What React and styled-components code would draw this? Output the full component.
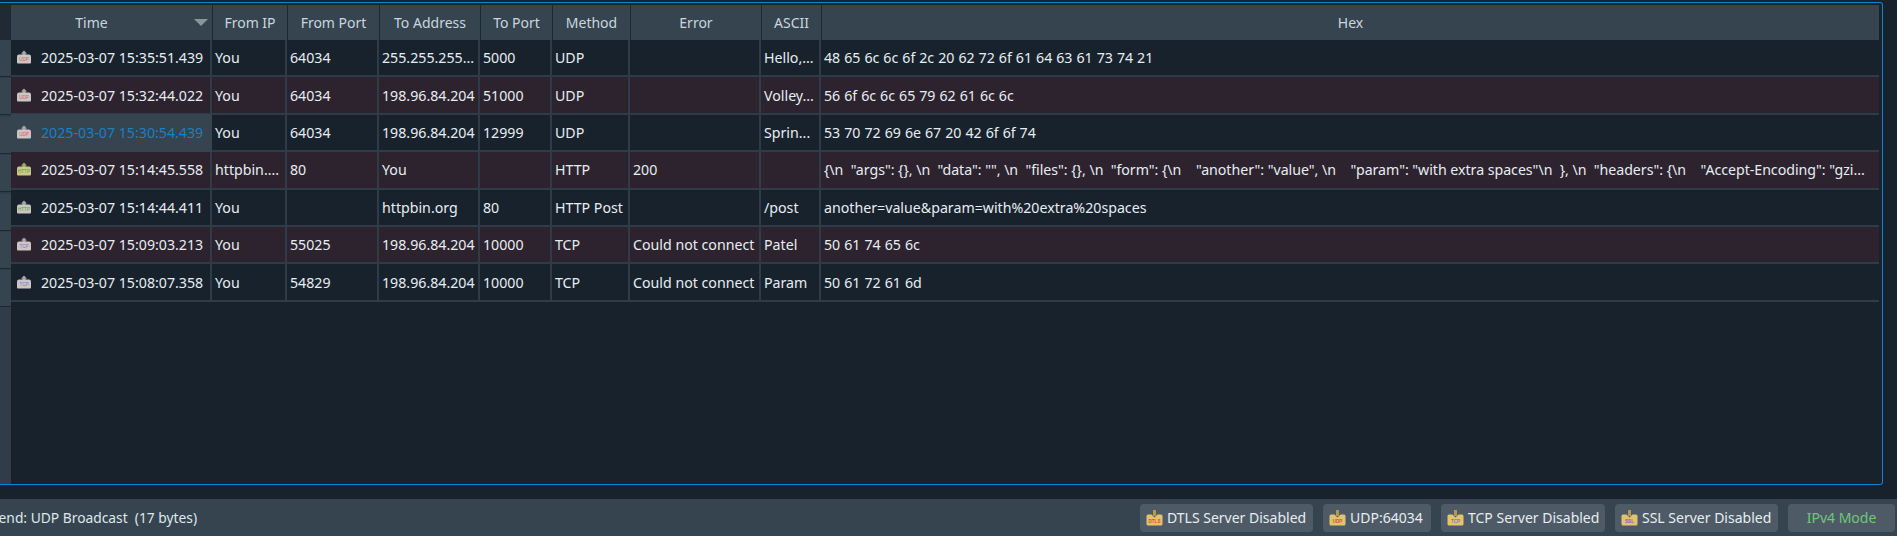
import React from 'react'
import styled, { createGlobalStyle } from 'styled-components'

const GlobalStyle = createGlobalStyle`
  html, body {
    margin: 0;
    padding: 0;
    background: #18222d;
  }
  body {
    font-family: "Noto Sans", "Open Sans", sans-serif;
    font-size: 14.2px;
    color: #e6edf2;
    overflow: hidden;
  }
`

const COLUMNS = '201px 75px 92px 101px 72px 78px 131px 60px 1fr'

const Page = styled.div`
  height: 536px;
  width: 1897px;
  display: flex;
  flex-direction: column;
`

const Frame = styled.div`
  flex: 1;
  min-height: 0;
  margin: 2px 14px 14px 0;
  border-top: 1px solid #1582cf;
  border-right: 1px solid #1582cf;
  border-bottom: 1px solid #1582cf;
  border-top-right-radius: 3px;
  border-bottom-right-radius: 3px;
  padding: 2px 3px 0 0;
  display: grid;
  grid-template-columns: 11px 1fr;
  grid-template-rows: 35px 1fr;
`

const Corner = styled.div`
  background: #1f2a35;
`

const HeaderRow = styled.div`
  display: grid;
  grid-template-columns: ${COLUMNS};
  background: #36444f;
`

const HeaderCell = styled.div`
  position: relative;
  display: flex;
  align-items: center;
  justify-content: center;
  padding-right: ${p => p.$pad || 0}px;
  border-left: ${p => (p.$first ? 'none' : '1px solid #1d2833')};
  color: #c9d6df;
  font-size: 14px;
`

const SortArrow = styled.span`
  position: absolute;
  right: 4px;
  top: 14px;
  width: 0;
  height: 0;
  border-left: 7px solid transparent;
  border-right: 7px solid transparent;
  border-top: 7px solid #8b9499;
`

const RowHeads = styled.div`
  display: flex;
  flex-direction: column;
  background: #303d48;
`

const RowHead = styled.div`
  height: 36px;
  margin-bottom: 1.4px;
  background: #36444f;
  border-bottom: 1px solid #1d2833;
`

const Body = styled.div`
  display: flex;
  flex-direction: column;
  min-width: 0;
`

const Row = styled.div`
  display: grid;
  grid-template-columns: ${COLUMNS};
  height: 37.4px;
  border-bottom: 2px solid #2f3c47;
  box-sizing: border-box;
  background: ${p => (p.$tint ? '#2d232e' : '#18222d')};
`

const Cell = styled.div`
  display: flex;
  align-items: center;
  min-width: 0;
  padding: 0 0 0 4px;
  border-right: 2px solid #2f3c47;
  margin-left: -1px;
  white-space: pre;
  overflow: hidden;
  color: #e6edf2;
`

const CellText = styled.span`
  white-space: pre;
`

const TimeCell = styled(Cell)`
  position: relative;
  z-index: ${p => (p.$selected ? 1 : 0)};
  margin: ${p => (p.$selected ? '-1px 0 -2px' : '0')};
  padding: 0 0 ${p => (p.$selected ? 1 : 0)}px 5px;
  gap: 9px;
  color: ${p => (p.$selected ? '#1a7fc4' : '#e6edf2')};
  background: ${p => (p.$selected ? '#36444f' : 'transparent')};
  border-right-color: ${p => (p.$selected ? '#36444f' : '#2f3c47')};
`

const HexCell = styled(Cell)`
  border-right: none;
  word-spacing: ${p => (p.$json ? 0 : 0.3)}px;
  letter-spacing: ${p => (p.$json ? -0.03 : 0)}px;
`

const StatusBar = styled.div`
  height: 37px;
  flex: none;
  display: flex;
  align-items: center;
  background: #36444f;
  padding-right: 2px;
  overflow: hidden;
`

const StatusText = styled.div`
  flex: 1;
  margin-left: -9px;
  white-space: pre;
  color: #dfe7ed;
  font-size: 13.8px;
`

const Chips = styled.div`
  display: flex;
  gap: 10px;
`

const Chip = styled.div`
  height: 28px;
  box-sizing: border-box;
  width: ${p => p.$w}px;
  display: flex;
  align-items: center;
  justify-content: ${p => (p.$center ? 'center' : 'flex-start')};
  gap: 4px;
  padding-left: ${p => (p.$center ? 0 : 6)}px;
  background: #4e5b66;
  border-radius: 4px;
  color: ${p => p.$color || '#e6edf2'};
  font-size: 14px;
  white-space: pre;
`

const OutboxIcon = ({ color, label, body = '#c9c6c4', top = '#a9a5a3' }) => (
  <svg width="16" height="15" viewBox="0 0 16 15" style={{ flex: 'none' }}>
    <path d="M8 0.5 L11 3.5 H9.6 V5.5 H6.4 V3.5 H5 Z" fill={top} />
    <path d="M1 6.5 Q1 4.5 3 4.5 H13 Q15 4.5 15 6.5 V12.5 Q15 13.5 14 13.5 H2 Q1 13.5 1 12.5 Z" fill={body} />
    <text x="8" y="11.2" textAnchor="middle" fontSize="4.6" fontFamily="Liberation Sans, sans-serif" fill={color}>{label}</text>
  </svg>
)

const InboxIcon = ({ color, label }) => (
  <svg width="17" height="16" viewBox="0 0 17 16" style={{ flex: 'none' }}>
    <rect x="7" y="0" width="3" height="6" fill="#b8964a" />
    <path d="M0.5 6 Q0.5 4.5 2 4.5 H5.5 L8.5 7.5 L11.5 4.5 H15 Q16.5 4.5 16.5 6 V14 Q16.5 15.5 15 15.5 H2 Q0.5 15.5 0.5 14 Z" fill="#e0c56e" />
    <text x="8.5" y="13" textAnchor="middle" fontSize="4.6" fontWeight="700" fontFamily="Liberation Sans, sans-serif" fill={color}>{label}</text>
  </svg>
)

const hexJson =
  '{\\n  "args": {}, \\n  "data": "", \\n  "files": {}, \\n  "form": {\\n    "another": "value", \\n    "param": "with extra spaces"\\n  }, \\n  "headers": {\\n    "Accept-Encoding": "gzi...'

const rows = [
  { time: '2025-03-07 15:35:51.439', icon: ['#d8605c', 'UDP'], fromIp: 'You', fromPort: '64034', to: '255.255.255...', toPort: '5000', method: 'UDP', error: '', ascii: 'Hello,...', hex: '48 65 6c 6c 6f 2c 20 62 72 6f 61 64 63 61 73 74 21' },
  { time: '2025-03-07 15:32:44.022', icon: ['#d8605c', 'UDP'], tint: true, fromIp: 'You', fromPort: '64034', to: '198.96.84.204', toPort: '51000', method: 'UDP', error: '', ascii: 'Volley...', hex: '56 6f 6c 6c 65 79 62 61 6c 6c' },
  { time: '2025-03-07 15:30:54.439', icon: ['#d8605c', 'UDP'], selected: true, fromIp: 'You', fromPort: '64034', to: '198.96.84.204', toPort: '12999', method: 'UDP', error: '', ascii: 'Sprin...', hex: '53 70 72 69 6e 67 20 42 6f 6f 74' },
  { time: '2025-03-07 15:14:45.558', icon: ['#5fa32e', 'HTTP'], incoming: true, tint: true, fromIp: 'httpbin....', fromPort: '80', to: 'You', toPort: '', method: 'HTTP', error: '200', ascii: '', hex: hexJson, json: true },
  { time: '2025-03-07 15:14:44.411', icon: ['#5fa32e', 'HTTP'], fromIp: 'You', fromPort: '', to: 'httpbin.org', toPort: '80', method: 'HTTP Post', error: '', ascii: '/post', hex: 'another=value&param=with%20extra%20spaces' },
  { time: '2025-03-07 15:09:03.213', icon: ['#8a6fd8', 'TCP'], tint: true, fromIp: 'You', fromPort: '55025', to: '198.96.84.204', toPort: '10000', method: 'TCP', error: 'Could not connect', ascii: 'Patel', hex: '50 61 74 65 6c' },
  { time: '2025-03-07 15:08:07.358', icon: ['#8a6fd8', 'TCP'], fromIp: 'You', fromPort: '54829', to: '198.96.84.204', toPort: '10000', method: 'TCP', error: 'Could not connect', ascii: 'Param', hex: '50 61 72 61 6d' }
]

const headers = ['From IP', 'From Port', 'To Address', 'To Port', 'Method', 'Error', 'ASCII', 'Hex']

const App = () => {
  return (
    <Page>
      <GlobalStyle />
      <Frame>
        <Corner />
        <HeaderRow>
          <HeaderCell $first $pad={40}>
            Time
            <SortArrow />
          </HeaderCell>
          {headers.map(h => (
            <HeaderCell key={h}>{h}</HeaderCell>
          ))}
        </HeaderRow>
        <RowHeads>
          {rows.map(r => (
            <RowHead key={r.time} />
          ))}
        </RowHeads>
        <Body>
          {rows.map(r => (
            <Row key={r.time} $tint={r.tint}>
              <TimeCell $selected={r.selected}>
                <OutboxIcon
                  color={r.icon[0]}
                  label={r.icon[1]}
                  body={r.incoming ? '#c9c68e' : '#c9c6c4'}
                  top={r.incoming ? '#a3a35e' : '#a9a5a3'}
                />
                <CellText>{r.time}</CellText>
              </TimeCell>
              <Cell><CellText>{r.fromIp}</CellText></Cell>
              <Cell><CellText>{r.fromPort}</CellText></Cell>
              <Cell><CellText>{r.to}</CellText></Cell>
              <Cell><CellText>{r.toPort}</CellText></Cell>
              <Cell><CellText>{r.method}</CellText></Cell>
              <Cell><CellText>{r.error}</CellText></Cell>
              <Cell><CellText>{r.ascii}</CellText></Cell>
              <HexCell $json={r.json}><CellText>{r.hex}</CellText></HexCell>
            </Row>
          ))}
        </Body>
      </Frame>
      <StatusBar>
        <StatusText>Send: UDP Broadcast  (17 bytes)</StatusText>
        <Chips>
          <Chip $w={173}><InboxIcon color="#d8502c" label="DTLS" />DTLS Server Disabled</Chip>
          <Chip $w={108}><InboxIcon color="#d8502c" label="UDP" />UDP:64034</Chip>
          <Chip $w={164}><InboxIcon color="#8a6fd8" label="TCP" />TCP Server Disabled</Chip>
          <Chip $w={163}><InboxIcon color="#9a4fd0" label="SSL" />SSL Server Disabled</Chip>
          <Chip $w={107} $center $color="#6fc77a">IPv4 Mode</Chip>
        </Chips>
      </StatusBar>
    </Page>
  )
}

export default App
